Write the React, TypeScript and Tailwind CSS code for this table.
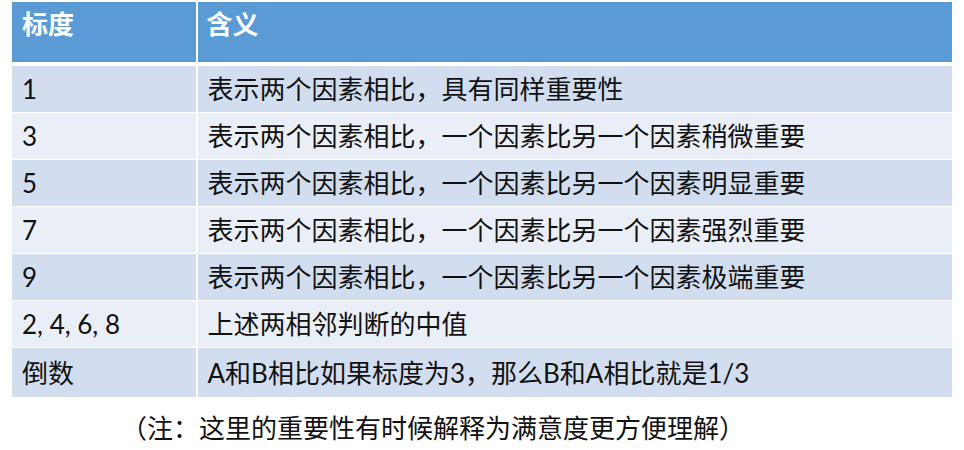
const rows = [
  { scale: '1', meaning: '表示两个因素相比，具有同样重要性' },
  { scale: '3', meaning: '表示两个因素相比，一个因素比另一个因素稍微重要' },
  { scale: '5', meaning: '表示两个因素相比，一个因素比另一个因素明显重要' },
  { scale: '7', meaning: '表示两个因素相比，一个因素比另一个因素强烈重要' },
  { scale: '9', meaning: '表示两个因素相比，一个因素比另一个因素极端重要' },
  { scale: '2, 4, 6, 8', meaning: '上述两相邻判断的中值' },
  { scale: '倒数', meaning: 'A和B相比如果标度为3，那么B和A相比就是1/3' },
];

export default function App() {
  return (
    <div
      className="w-[964px] h-[450px] bg-white text-[#111] text-[26px] leading-[36px] pt-[2px] pl-[12px]"
      style={{ fontFamily: 'Lato, "Noto Sans CJK SC", sans-serif' }}
    >
      <div className="w-[940px] flex flex-col gap-[1px]">
        <div className="grid grid-cols-[184px_1fr] gap-x-[1.5px] h-[60px] mb-[3px]">
          <div className="bg-[#5b9bd5] text-white font-bold pl-[10px] pt-[4px]">标度</div>
          <div className="bg-[#5b9bd5] text-white font-bold pl-[9px] pt-[4px]">含义</div>
        </div>
        {rows.map((r, i) => {
          const bg = i % 2 === 0 ? 'bg-[#d2deef]' : 'bg-[#eaeff7]';
          const h = i === rows.length - 1 ? 'h-[49px]' : 'h-[46px]';
          return (
            <div key={i} className={`grid grid-cols-[184px_1fr] gap-x-[1.5px] ${h}`}>
              <div className={`${bg} flex items-center pl-[10px]`}>{r.scale}</div>
              <div className={`${bg} flex items-center pl-[10px]`}>{r.meaning}</div>
            </div>
          );
        })}
      </div>
      <div className="pl-[109px] mt-[13px]">（注：这里的重要性有时候解释为满意度更方便理解）</div>
    </div>
  );
}
